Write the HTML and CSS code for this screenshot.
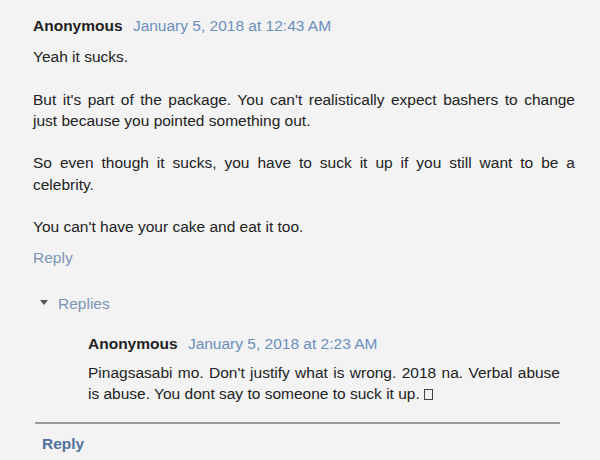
FILE: index.html
```html
<!DOCTYPE html>
<html lang="en">
<head>
  <meta charset="UTF-8" />
  <title>Comments</title>
  <link rel="stylesheet" href="styles.css">
</head>
<body>
  <div class="comment">
    <div class="comment-header">
      <span class="user">Anonymous</span>
      <a class="datetime" href="#">January 5, 2018 at 12:43 AM</a>
    </div>
    <p class="comment-content">Yeah it sucks.<br><br>But it's part of the package. You can't realistically expect bashers to change just because you pointed something out.<br><br>So even though it sucks, you have to suck it up if you still want to be a celebrity.<br><br>You can't have your cake and eat it too.</p>
    <div class="comment-actions"><a href="#">Reply</a></div>

    <div class="thread">
      <div class="thread-toggle">
        <svg class="arrow" width="8" height="5" viewBox="0 0 8 5"><path d="M0 0h8L4 5z" fill="#555"/></svg>
        <a href="#">Replies</a>
      </div>
      <div class="reply">
        <div class="comment-header">
          <span class="user">Anonymous</span>
          <a class="datetime" href="#">January 5, 2018 at 2:23 AM</a>
        </div>
        <p class="comment-content">Pinagsasabi mo. Don't justify what is wrong. 2018 na. Verbal abuse is abuse. You dont say to someone to suck it up. <span class="tofu"></span></p>
      </div>
      <div class="continue"><a href="#">Reply</a></div>
    </div>
  </div>
</body>
</html>
```

FILE: styles.css
```css
body {
  margin: 0;
  background-color: #f3f3f3;
  font-family: "Liberation Sans", Arial, sans-serif;
  font-size: 15.5px;
  color: #222;
}
a {
  text-decoration: none;
}
.comment {
  padding: 15px 25px 0 33px;
}
.comment-header {
  line-height: 21px;
}
.user {
  font-weight: bold;
  color: #222;
  margin-right: 6px;
}
.datetime {
  color: #6b8fbd;
}
.comment-content {
  margin: 10px 0 0;
  line-height: 21.3px;
  text-align: justify;
}
.comment-actions {
  margin-top: 9px;
  line-height: 21px;
}
.comment-actions a {
  color: #7b95b6;
}
.thread {
  margin: 25px 15px 0 2px;
}
.thread-toggle {
  display: flex;
  align-items: center;
  gap: 10px;
  padding-left: 5px;
  line-height: 21px;
}
.thread-toggle a {
  color: #7b95b6;
}
.arrow {
  margin-top: -2px;
}
.reply {
  padding-left: 53px;
  margin-top: 19px;
}
.reply .comment-content {
  margin-top: 8px;
  line-height: 21px;
}
.tofu {
  display: inline-block;
  width: 7px;
  height: 9px;
  border: 1px solid #444;
  vertical-align: -1px;
}
.continue {
  margin-top: 18px;
  border-top: 2px solid #999;
  padding: 9px 0 0 7px;
  line-height: 21px;
}
.continue a {
  color: #4f719b;
  font-weight: bold;
}
```
